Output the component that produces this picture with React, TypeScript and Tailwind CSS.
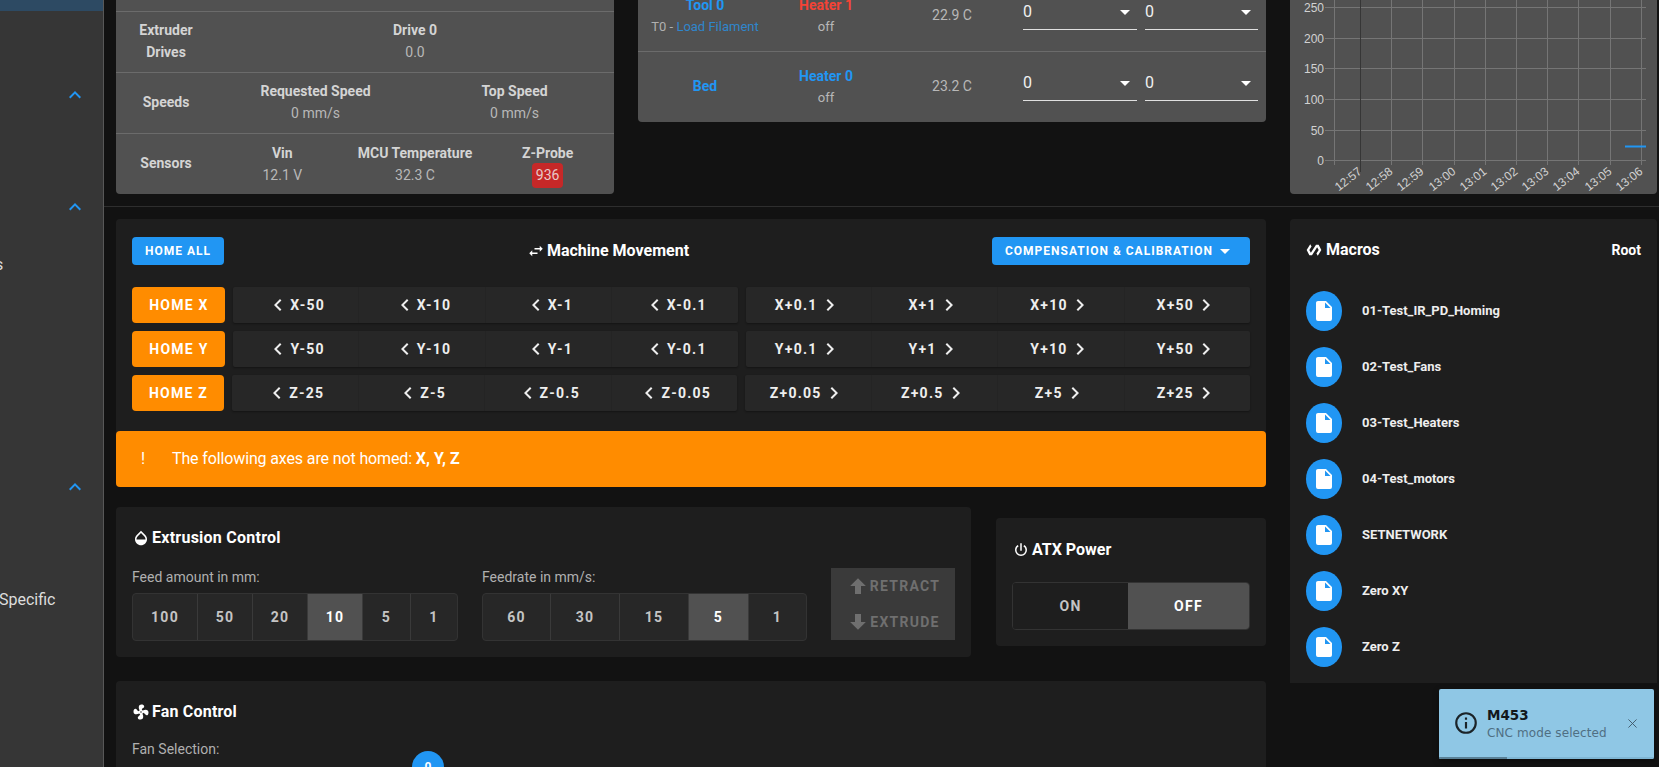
import React from "react";

const P = {
  left: "M15.41,16.58L10.83,12L15.41,7.41L14,6L8,12L14,18L15.41,16.58Z",
  right: "M8.59,16.58L13.17,12L8.59,7.41L10,6L16,12L10,18L8.59,16.58Z",
  up: "M7.41,15.41L12,10.83L16.59,15.41L18,14L12,8L6,14L7.41,15.41Z",
  swap: "M21,9L17,5V8H10V10H17V13M7,11L3,15L7,19V16H14V14H7V11Z",
  opacity:
    "M17.66,8L12,2.35L6.34,8C4.78,9.56 4,11.64 4,13.64C4,15.64 4.78,17.75 6.34,19.31C7.9,20.87 9.95,21.66 12,21.66C14.05,21.66 16.1,20.87 17.66,19.31C19.22,17.75 20,15.64 20,13.64C20,11.64 19.22,9.56 17.66,8M6,14C6,12 6.62,10.73 7.76,9.6L12,5.27L16.24,9.65C17.38,10.77 18,12 18,14H6Z",
  fan: "M12,11A1,1 0 0,0 11,12A1,1 0 0,0 12,13A1,1 0 0,0 13,12A1,1 0 0,0 12,11M12.5,2C17,2 17.11,5.57 14.75,6.75C13.76,7.24 13.32,8.29 13.13,9.22C13.61,9.42 14.03,9.73 14.35,10.13C18.05,8.13 22.03,8.92 22.03,12.5C22.03,17 18.46,17.1 17.28,14.73C16.78,13.74 15.72,13.3 14.79,13.11C14.59,13.59 14.28,14 13.88,14.34C15.87,18.03 15.08,22 11.5,22C7,22 6.91,18.42 9.27,17.24C10.25,16.75 10.69,15.71 10.89,14.79C10.4,14.59 9.97,14.27 9.65,13.87C5.96,15.85 2,15.07 2,11.5C2,7 5.56,6.89 6.74,9.26C7.24,10.25 8.29,10.68 9.22,10.87C9.41,10.39 9.73,9.97 10.14,9.65C8.15,5.96 8.94,2 12.5,2Z",
  polymer: "M19,4H15L7.3,16.2L5,12L8.35,6.67L6.35,3.5L1,12L5,20H9L16.7,7.8L19,12L15.65,17.33L17.65,20.5L23,12L19,4Z",
  power:
    "M16.56,5.44L15.11,6.89C16.84,7.94 18,9.83 18,12A6,6 0 0,1 12,18A6,6 0 0,1 6,12C6,9.83 7.16,7.94 8.88,6.88L7.44,5.44C5.36,6.88 4,9.28 4,12A8,8 0 0,0 12,20A8,8 0 0,0 20,12C20,9.28 18.64,6.88 16.56,5.44M13,3H11V13H13",
  file: "M13,9V3.5L18.5,9M6,2C4.89,2 4,2.89 4,4V20A2,2 0 0,0 6,22H18A2,2 0 0,0 20,20V8L14,2H6Z",
  arrowUp: "M15,20H9V12H4.16L12,4.16L19.84,12H15V20Z",
  arrowDown: "M9,4H15V12H19.84L12,19.84L4.16,12H9V4Z",
  caret: "M7,10L12,15L17,10H7Z",
};

function Icon({ d, className }: { d: string; className: string }) {
  return (
    <svg viewBox="0 0 24 24" className={className} fill="currentColor" aria-hidden="true">
      <path d={d} />
    </svg>
  );
}

function Cell({ title, value, badge }: { title: string; value: string; badge?: boolean }) {
  return (
    <div className="flex flex-col items-center">
      <div className="text-sm font-bold leading-[22px] text-[#d4d4d4]">{title}</div>
      {badge ? (
        <div className="-mt-[1px] rounded-[4px] bg-[#c62828] px-[4px] text-sm leading-[25px] text-[#e8c9c9]">{value}</div>
      ) : (
        <div className="text-sm leading-[22px] text-[#b8b8b8]">{value}</div>
      )}
    </div>
  );
}

function StatusRow({ label, cols, last, children }: { label: React.ReactNode; cols: string; last?: boolean; children: React.ReactNode }) {
  return (
    <div className={`flex items-center pb-[2px] ${last ? "h-[60px]" : "h-[61px] border-b border-[#6b6b6b]"}`}>
      <div className="w-[100px] text-center text-sm font-bold leading-[22px] text-[#d4d4d4]">{label}</div>
      <div className={`grid flex-1 ${cols}`}>{children}</div>
    </div>
  );
}

function Select({ cls }: { cls: string }) {
  return (
    <div className={`mb-[7px] flex h-[35px] items-center justify-between border-b border-[#e0e0e0] text-base text-[#f0f0f0] ${cls}`}>
      <span>0</span>
      <Icon d={P.caret} className="h-6 w-6 text-white" />
    </div>
  );
}

function HeaterRow({ tool, sub, heater, heaterClass, temp, last }: { tool: string; sub?: boolean; heater: string; heaterClass: string; temp: string; last?: boolean }) {
  return (
    <div className={`flex items-center ${last ? "h-[70px]" : "-mt-[19px] h-[71px] border-b border-[#6b6b6b]"}`}>
      <div className={`w-[134px] text-center ${sub ? "" : "mb-[2px]"}`}>
        <div className="text-sm font-bold leading-[22px] text-[#2196f3]">{tool}</div>
        {sub && (
          <div className="text-[13px] leading-[22px] text-[#b0b0b0]">
            T0 - <span className="text-[#2f86cc]">Load Filament</span>
          </div>
        )}
      </div>
      <div className="w-[108px] text-center">
        <div className={`text-sm font-bold leading-[22px] ${heaterClass}`}>{heater}</div>
        <div className="text-[13px] leading-[22px] text-[#b8b8b8]">off</div>
      </div>
      <div className="mb-[2px] w-[143px] pl-[1px] text-center text-sm text-[#b8b8b8]">{temp}</div>
      <div className="flex gap-2">
        <Select cls="w-[114px]" />
        <Select cls="w-[113px]" />
      </div>
    </div>
  );
}

function Chart() {
  const ys: [number, string][] = [[7.5, "250"], [38.5, "200"], [68.5, "150"], [99.5, "100"], [130.5, "50"], [160.5, "0"]];
  const xs: [number, string][] = [
    [1360.5, "12:57"], [1391.5, "12:58"], [1422.5, "12:59"], [1454.5, "13:00"], [1485.5, "13:01"],
    [1516.5, "13:02"], [1547.5, "13:03"], [1578.5, "13:04"], [1610.5, "13:05"], [1641.5, "13:06"],
  ];
  return (
    <svg viewBox="1290 0 367 194" className="h-[194px] w-[367px]">
      {ys.map(([y, t]) => (
        <g key={t}>
          <line x1={1325} x2={1646} y1={y} y2={y} stroke="#757575" strokeWidth={1} />
          <text x={1324} y={y + 4} textAnchor="end" fontSize={12} fill="#d2d2d2" fontFamily="'Liberation Sans', sans-serif">{t}</text>
        </g>
      ))}
      <line x1={1334.5} x2={1334.5} y1={0} y2={165} stroke="#757575" />
      {xs.map(([x, t], i) => (
        <g key={t}>
          <line x1={x} x2={x} y1={0} y2={i === 0 ? 172 : 165} stroke={i === 0 ? "#363636" : "#757575"} />
          <text transform={`translate(${x + 2} 173) rotate(-38)`} textAnchor="end" fontSize={12} fill="#d2d2d2" fontFamily="'Liberation Sans', sans-serif">{t}</text>
        </g>
      ))}
      <line x1={1625} x2={1646} y1={146.5} y2={146.5} stroke="#2196f3" strokeWidth={2} />
    </svg>
  );
}

const btnText = "text-sm font-bold tracking-[1.25px] uppercase";

function MoveGroup({ items, dir }: { items: string[]; dir: "left" | "right" }) {
  return (
    <div className="flex h-9 flex-1 rounded-[2px] bg-[#272727] shadow-[0_1px_2px_rgba(0,0,0,0.35)]">
      {items.map((t, i) => (
        <div key={t} className={`flex flex-1 items-center justify-center text-[#eeeeee] ${btnText} ${i > 0 ? "border-l border-[#242424]" : ""}`}>
          {dir === "left" && <Icon d={P.left} className="h-6 w-6" />}
          <span>{t}</span>
          {dir === "right" && <Icon d={P.right} className="h-6 w-6" />}
        </div>
      ))}
    </div>
  );
}

function MoveRow({ home, homeClass, minus, plus }: { home: string; homeClass: string; minus: string[]; plus: string[] }) {
  return (
    <div className="flex gap-2">
      <div className={`flex h-9 items-center justify-center rounded-[4px] bg-[#ff8c00] pl-[1px] text-white ${btnText} ${homeClass}`}>{home}</div>
      <MoveGroup items={minus} dir="left" />
      <MoveGroup items={plus} dir="right" />
    </div>
  );
}

function ToggleGroup({ items }: { items: { t: string; cls: string; active?: boolean }[] }) {
  return (
    <div className="flex h-12 overflow-hidden rounded-[4px] border border-[#333333] bg-[#272727]">
      {items.map((it, i) => (
        <div
          key={it.t}
          className={`flex items-center justify-center ${btnText} ${it.cls} ${i > 0 ? "border-l border-[#3a3a3a]" : ""} ${it.active ? "bg-[#515151] text-white" : "text-[#c4c4c4]"}`}
        >
          {it.t}
        </div>
      ))}
    </div>
  );
}

function PanelTitle({ d, text, cls }: { d: string; text: string; cls?: string }) {
  return (
    <div className={`flex h-6 items-center text-base font-bold text-white ${cls ?? ""}`}>
      <Icon d={d} className="mr-[2px] h-[18px] w-[18px]" />
      <span>{text}</span>
    </div>
  );
}

function Chevron({ cls }: { cls: string }) {
  return (
    <div className={`flex justify-end pr-[16px] ${cls}`}>
      <Icon d={P.up} className="h-6 w-6 text-[#2196f3]" />
    </div>
  );
}

const macros = ["01-Test_IR_PD_Homing", "02-Test_Fans", "03-Test_Heaters", "04-Test_motors", "SETNETWORK", "Zero XY", "Zero Z"];

export default function App() {
  return (
    <div className="relative flex h-[767px] w-[1659px] overflow-hidden bg-[#121212] font-['Roboto',sans-serif]">
      <aside className="h-full w-[104px] shrink-0 overflow-hidden border-r border-[#585858] bg-[#363636]">
        <div className="h-[11px] bg-[#2d4a63]" />
        <Chevron cls="mt-[72px]" />
        <Chevron cls="mt-[88px]" />
        <div className="mt-[34px] -ml-[5px] text-base leading-[24px] text-[#dddddd]">s</div>
        <Chevron cls="mt-[198px]" />
        <div className="mt-[89px] -ml-[1px] text-base leading-[24px] text-[#dddddd]">Specific</div>
      </aside>

      <main className="flex min-w-0 flex-1 flex-col">
        <section className="flex h-[207px] shrink-0 items-start overflow-hidden border-b border-[#2e2e2e] pl-[12px]">
          <div className="w-[498px] rounded-b-[4px] bg-[#515151]">
            <div className="h-[12px] border-b border-[#6b6b6b]" />
            <StatusRow label={<>Extruder<br />Drives</>} cols="grid-cols-1">
              <Cell title="Drive 0" value="0.0" />
            </StatusRow>
            <StatusRow label="Speeds" cols="grid-cols-2">
              <Cell title="Requested Speed" value="0 mm/s" />
              <Cell title="Top Speed" value="0 mm/s" />
            </StatusRow>
            <StatusRow label="Sensors" cols="grid-cols-3 mt-[4px]" last>
              <Cell title="Vin" value="12.1 V" />
              <Cell title="MCU Temperature" value="32.3 C" />
              <Cell title="Z-Probe" value="936" badge />
            </StatusRow>
          </div>

          <div className="ml-[24px] w-[628px] rounded-b-[4px] bg-[#515151]">
            <HeaterRow tool="Tool 0" sub heater="Heater 1" heaterClass="text-[#f44336]" temp="22.9 C" />
            <HeaterRow tool="Bed" heater="Heater 0" heaterClass="text-[#2196f3]" temp="23.2 C" last />
          </div>

          <div className="ml-[24px] w-[367px] overflow-hidden rounded-b-[4px] bg-[#515151]">
            <Chart />
          </div>
        </section>

        <section className="flex items-start pl-[12px] pt-[12px]">
          <div className="w-[1150px] shrink-0">
            <div className="rounded-[4px] bg-[#1e1e1e]">
              <div className="px-4 pt-[18px]">
                <div className="flex h-7 items-center justify-between">
                  <div className="flex h-7 w-[92px] items-center justify-center rounded-[4px] bg-[#2196f3] text-xs font-bold tracking-[1px] text-white">HOME ALL</div>
                  <div className="flex items-center text-base font-bold text-white">
                    <Icon d={P.swap} className="mr-[2px] h-[18px] w-[18px]" />
                    Machine Movement
                  </div>
                  <div className="flex h-7 w-[258px] items-center justify-center rounded-[4px] bg-[#2196f3] text-xs font-bold tracking-[1px] text-white">
                    COMPENSATION &amp; CALIBRATION
                    <Icon d={P.caret} className="h-6 w-6" />
                  </div>
                </div>
                <div className="mt-[22px] flex flex-col gap-2">
                  <MoveRow home="Home X" homeClass="w-[93px]" minus={["X-50", "X-10", "X-1", "X-0.1"]} plus={["X+0.1", "X+1", "X+10", "X+50"]} />
                  <MoveRow home="Home Y" homeClass="w-[93px]" minus={["Y-50", "Y-10", "Y-1", "Y-0.1"]} plus={["Y+0.1", "Y+1", "Y+10", "Y+50"]} />
                  <MoveRow home="Home Z" homeClass="w-[92px]" minus={["Z-25", "Z-5", "Z-0.5", "Z-0.05"]} plus={["Z+0.05", "Z+0.5", "Z+5", "Z+25"]} />
                </div>
              </div>
              <div className="mt-[20px] flex h-[56px] items-center rounded-[4px] bg-[#ff8c00] text-base text-white">
                <span className="w-[56px] pl-[25px]">!</span>
                <span className="tracking-[-0.13px]">
                  The following axes are not homed: <b className="font-bold tracking-normal">X, Y, Z</b>
                </span>
              </div>
            </div>

            <div className="mt-[20px] flex items-start">
              <div className="h-[150px] w-[855px] rounded-[4px] bg-[#1e1e1e] px-4 pt-[19px]">
                <PanelTitle d={P.opacity} text="Extrusion Control" cls="tracking-[0.25px]" />
                <div className="flex items-end">
                  <div className="w-[326px]">
                    <div className="mt-[17px] mb-[6px] text-sm leading-[20px] text-[#b0b0b0]">Feed amount in mm:</div>
                    <ToggleGroup
                      items={[
                        { t: "100", cls: "w-[64px]" },
                        { t: "50", cls: "w-[55px]" },
                        { t: "20", cls: "w-[55px]" },
                        { t: "10", cls: "w-[55px]", active: true },
                        { t: "5", cls: "w-[48px]" },
                        { t: "1", cls: "w-[47px]" },
                      ]}
                    />
                  </div>
                  <div className="ml-[24px] w-[325px]">
                    <div className="mb-[6px] text-sm leading-[20px] text-[#b0b0b0]">Feedrate in mm/s:</div>
                    <ToggleGroup
                      items={[
                        { t: "60", cls: "w-[67px]" },
                        { t: "30", cls: "w-[69px]" },
                        { t: "15", cls: "w-[69px]" },
                        { t: "5", cls: "w-[60px]", active: true },
                        { t: "1", cls: "w-[58px]" },
                      ]}
                    />
                  </div>
                  <div className={`mb-[1px] ml-[24px] w-[125px] bg-[#3a3a3a] text-[#6f6f6f] ${btnText}`}>
                    <div className="flex h-9 items-center justify-center">
                      <Icon d={P.arrowUp} className="h-6 w-6" />
                      <span>Retract</span>
                    </div>
                    <div className="flex h-9 items-center justify-center">
                      <Icon d={P.arrowDown} className="h-6 w-6" />
                      <span>Extrude</span>
                    </div>
                  </div>
                </div>
              </div>

              <div className="ml-[25px] mt-[11px] h-[128px] w-[270px] rounded-[4px] bg-[#1e1e1e] px-4 pt-[20px]">
                <PanelTitle d={P.power} text="ATX Power" />
                <div className="mt-[20px] flex h-12 overflow-hidden rounded-[4px] border border-[#333333]">
                  <div className={`flex w-[115px] items-center justify-center bg-[#1e1e1e] text-[#c4c4c4] ${btnText}`}>On</div>
                  <div className={`flex flex-1 items-center justify-center bg-[#515151] text-white ${btnText}`}>Off</div>
                </div>
              </div>
            </div>

            <div className="relative mt-[24px] h-[120px] rounded-[4px] bg-[#1e1e1e] px-4 pt-[19px]">
              <PanelTitle d={P.fan} text="Fan Control" cls="tracking-[0.2px]" />
              <div className="mt-[15px] text-sm leading-[20px] text-[#b0b0b0]">Fan Selection:</div>
              <div className="absolute left-[296px] top-[70px] flex h-8 w-8 items-center justify-center rounded-full bg-[#2196f3] text-xs font-bold text-white">0</div>
            </div>
          </div>

          <div className="ml-[24px] h-[464px] w-[367px] shrink-0 rounded-t-[4px] bg-[#1e1e1e] px-4 pt-[19px]">
            <div className="flex h-6 items-center justify-between text-base font-bold text-white">
              <div className="flex items-center">
                <Icon d={P.polymer} className="mr-[4px] h-[16px] w-[16px]" />
                Macros
              </div>
              <span className="text-sm">Root</span>
            </div>
            <div className="mt-[29px] flex flex-col gap-4">
              {macros.map((m) => (
                <div key={m} className="flex h-10 items-center">
                  <div className="flex h-10 w-9 items-center justify-center rounded-[50%] bg-[#2196f3] text-white">
                    <Icon d={P.file} className="h-6 w-6" />
                  </div>
                  <span className="ml-5 text-[13px] font-bold text-[#eeeeee]">{m}</span>
                </div>
              ))}
            </div>
          </div>
        </section>
      </main>

      <div className="absolute left-[1439px] top-[689px] h-[70px] w-[215px] overflow-hidden rounded-[2px] bg-[#8fc7e5] font-['DejaVu_Sans',sans-serif] shadow-[0_2px_6px_rgba(0,0,0,0.4)]">
        <svg viewBox="0 0 24 24" className="absolute left-[14px] top-[21px] h-[26px] w-[26px] text-[#1b2328]" fill="none" stroke="currentColor" strokeWidth="2">
          <circle cx="12" cy="12" r="9" />
          <line x1="12" y1="11" x2="12" y2="17" />
          <line x1="12" y1="7" x2="12" y2="9" />
        </svg>
        <div className="absolute left-[48px] top-[16px] text-[13.5px] font-bold leading-[20px] text-[#12181c]">M453</div>
        <div className="absolute left-[48px] top-[34px] whitespace-nowrap text-xs leading-[20px] tracking-[0.1px] text-[#4f6f83]">CNC mode selected</div>
        <svg viewBox="0 0 10 10" className="absolute left-[189px] top-[30px] h-[9px] w-[9px]" stroke="#3c5566" strokeWidth="1">
          <line x1="0.5" y1="0.5" x2="9.5" y2="9.5" />
          <line x1="9.5" y1="0.5" x2="0.5" y2="9.5" />
        </svg>
        <div className="absolute bottom-0 left-0 h-[2px] w-full bg-[#7fb6d4]">
          <div className="h-full w-[68px] bg-[#5a8197]" />
        </div>
      </div>
    </div>
  );
}
